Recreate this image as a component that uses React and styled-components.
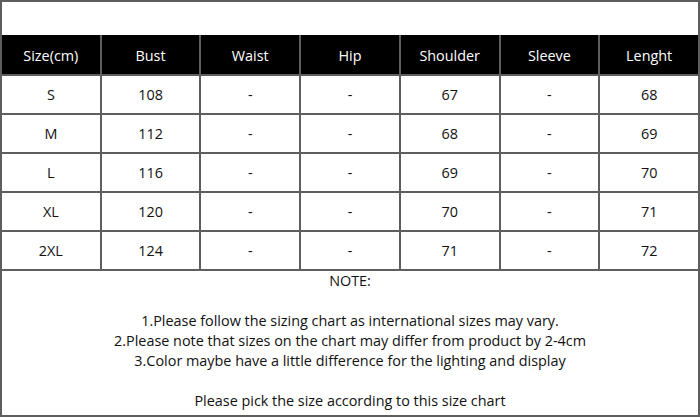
import React from 'react';
import styled, {createGlobalStyle} from 'styled-components';

const GlobalStyle = createGlobalStyle`
  html, body {
    margin: 0;
    padding: 0;
    background: #fff;
  }
  body {
    font-family: "Open Sans", "Noto Sans", sans-serif;
  }
`;

const LINE = '#5e5e5e';

const Frame = styled.div`
  box-sizing: border-box;
  width: 700px;
  height: 417px;
  border: 2px solid ${LINE};
  display: flex;
  flex-direction: column;
  overflow: hidden;
`;

const TopSpace = styled.div`
  height: 33px;
  flex: none;
`;

const Grid = styled.div`
  display: grid;
  grid-template-columns: repeat(7, 1fr);
  grid-template-rows: 39px repeat(5, 37px);
  gap: 2px;
  background: ${LINE};
  border-bottom: 2px solid ${LINE};
  flex: none;
`;

const Cell = styled.div`
  display: flex;
  align-items: center;
  justify-content: center;
  padding-top: ${p => (p.$head ? '1px' : '0')};
  font-size: 14.4px;
  background: ${p => (p.$head ? '#000' : '#fff')};
  color: ${p => (p.$head ? '#fff' : '#111')};
`;

const Notes = styled.div`
  flex: 1;
  text-align: center;
  font-size: 14.4px;
  line-height: 20px;
  color: #111;
`;

const Blank = styled.div`
  height: 20px;
`;

const headers = ['Size(cm)', 'Bust', 'Waist', 'Hip', 'Shoulder', 'Sleeve', 'Lenght'];

const rows = [
  ['S', '108', '-', '-', '67', '-', '68'],
  ['M', '112', '-', '-', '68', '-', '69'],
  ['L', '116', '-', '-', '69', '-', '70'],
  ['XL', '120', '-', '-', '70', '-', '71'],
  ['2XL', '124', '-', '-', '71', '-', '72']
];

export default function App() {
  return (
    <>
      <GlobalStyle />
      <Frame>
        <TopSpace />
        <Grid>
          {headers.map(h => (
            <Cell key={h} $head>
              {h}
            </Cell>
          ))}
          {rows.map(r => r.map((v, i) => <Cell key={r[0] + i}>{v}</Cell>))}
        </Grid>
        <Notes>
          <div>NOTE:</div>
          <Blank />
          <div>1.Please follow the sizing chart as international sizes may vary.</div>
          <div>2.Please note that sizes on the chart may differ from product by 2-4cm</div>
          <div>3.Color maybe have a little difference for the lighting and display</div>
          <Blank />
          <div>Please pick the size according to this size chart</div>
        </Notes>
      </Frame>
    </>
  );
}
